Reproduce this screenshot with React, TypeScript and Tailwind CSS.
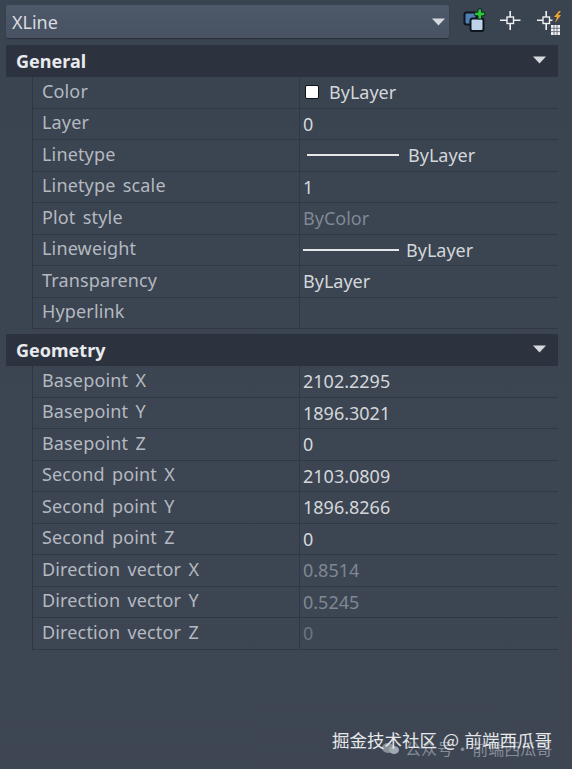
import React from "react";

const font = { fontFamily: '"Noto Sans", "Noto Sans CJK SC", sans-serif' };

type Row = {
  label: string;
  value?: string;
  kind?: "swatch" | "line" | "line2" | "dim" | "dimmer";
};

const general: Row[] = [
  { label: "Color", value: "ByLayer", kind: "swatch" },
  { label: "Layer", value: "0" },
  { label: "Linetype", value: "ByLayer", kind: "line" },
  { label: "Linetype scale", value: "1" },
  { label: "Plot style", value: "ByColor", kind: "dim" },
  { label: "Lineweight", value: "ByLayer", kind: "line2" },
  { label: "Transparency", value: "ByLayer" },
  { label: "Hyperlink" },
];

const geometry: Row[] = [
  { label: "Basepoint X", value: "2102.2295" },
  { label: "Basepoint Y", value: "1896.3021" },
  { label: "Basepoint Z", value: "0" },
  { label: "Second point X", value: "2103.0809" },
  { label: "Second point Y", value: "1896.8266" },
  { label: "Second point Z", value: "0" },
  { label: "Direction vector X", value: "0.8514", kind: "dim" },
  { label: "Direction vector Y", value: "0.5245", kind: "dim" },
  { label: "Direction vector Z", value: "0", kind: "dimmer" },
];

function Caret({ className }: { className: string }) {
  return (
    <svg width="13" height="8" viewBox="0 0 13 8" className={className}>
      <path d="M0 0.5h13L6.5 7.5z" fill="#d5dae0" />
    </svg>
  );
}

function Value({ row }: { row: Row }) {
  if (row.kind === "swatch") {
    return (
      <div className="flex items-center pl-[5px]">
        <span className="w-[14px] h-[14px] bg-white border border-[#11151b] rounded-[2px] mr-[10px]" />
        <span className="text-[#d4d7da]">{row.value}</span>
      </div>
    );
  }
  if (row.kind === "line" || row.kind === "line2") {
    return (
      <div className={row.kind === "line" ? "flex items-center pl-[7px]" : "flex items-center pl-[3px]"}>
        <span className={row.kind === "line" ? "h-[2px] w-[92px] bg-[#e4e6e8] mr-[9px]" : "h-[2px] w-[96px] bg-[#e4e6e8] mr-[7px]"} />
        <span className="text-[#d4d7da]">{row.value}</span>
      </div>
    );
  }
  const tone =
    row.kind === "dim" ? "text-[#7f8894]" : row.kind === "dimmer" ? "text-[#6b7482]" : "text-[#d4d7da]";
  return <div className={`pl-[3px] ${tone}`}>{row.value}</div>;
}

function Section({ title, rows }: { title: string; rows: Row[] }) {
  return (
    <section>
      <div className="h-[32px] flex items-center justify-between pl-[10px] pr-[12px] bg-[#2c323e]">
        <span className="text-[18px] font-bold text-[#e8eaed]">{title}</span>
        <Caret className="mb-[3px]" />
      </div>
      <div className="ml-[26px] border-l border-[#2f3643]">
        {rows.map((row) => (
          <div key={row.label} className="h-[31.5px] grid grid-cols-[266px_1fr] border-b border-[#313845] items-stretch">
            <div className="pl-[9px] flex items-center text-[#b4b9c0] pb-[3px] tracking-[0.15px] [word-spacing:2.5px]">{row.label}</div>
            <div className="border-l border-[#313845] flex flex-col justify-center">
              <Value row={row} />
            </div>
          </div>
        ))}
      </div>
    </section>
  );
}

export default function App() {
  return (
    <div
      className="relative w-[572px] h-[769px] overflow-hidden bg-gradient-to-b from-[#3a4350] to-[#3e4654] text-[18px] leading-[24px] pt-[5px] pl-[6px]"
      style={font}
    >
      {/* Toolbar */}
      <div className="flex items-center h-[33px]">
        <div className="w-[443px] shrink-0 h-[33px] flex items-center justify-between pl-[6px] pr-[4px] rounded-[2px] bg-gradient-to-b from-[#4d5868] to-[#485262] shadow-[0_1px_1px_#2b313b]">
          <span className="text-[#d9dce0]">XLine</span>
          <Caret className="mt-[1px]" />
        </div>
        <svg width="114" height="33" viewBox="0 0 114 33" className="ml-[9px] shrink-0">
          <rect x="6.5" y="7.5" width="12" height="12" rx="2" fill="#4f7fb5" stroke="#10151c" strokeWidth="2" />
          <rect x="12.5" y="13.5" width="13" height="12.5" rx="2" fill="#bcd3ea" stroke="#10151c" strokeWidth="2" />
          <path d="M20 4h3.5v3.2h3.2v3.5h-3.2V14H20v-3.3h-3.3V7.2H20z" fill="#29c93a" stroke="#10151c" strokeWidth="0.8" />
          <rect x="49" y="12" width="6.5" height="6.5" fill="none" stroke="#eef0f2" strokeWidth="1.4" />
          <path d="M52.2 6v6M52.2 18.5V25M42 15.2h7M55.5 15.2h7" stroke="#eef0f2" strokeWidth="1.6" />
          <rect x="85" y="12" width="6.5" height="6.5" fill="none" stroke="#eef0f2" strokeWidth="1.4" />
          <path d="M88.2 6v6M88.2 18.5V25M79 15.2h6M91.5 15.2h3" stroke="#eef0f2" strokeWidth="1.6" />
          <path d="M101 6l-5 6h3l-2 6 6-8h-3l3-4z" fill="#f0a52c" />
          <rect x="93" y="20" width="9" height="10" fill="#eef0f2" />
          <path d="M93 23.3h9M93 26.6h9M96 20v10M99 20v10" stroke="#59616d" strokeWidth="0.8" />
        </svg>
      </div>

      <div className="mt-[7px] w-[552px]">
        <Section title="General" rows={general} />
        <div className="h-[5px]" />
        <Section title="Geometry" rows={geometry} />
      </div>

      {/* Watermark */}
      <svg width="17" height="11" viewBox="0 0 17 11" className="absolute left-[382px] top-[743px]">
        <ellipse cx="6" cy="5" rx="6" ry="5" fill="#8a919b" />
        <ellipse cx="12" cy="7" rx="5" ry="4" fill="#a2a8b0" />
      </svg>
      <div className="absolute left-[405px] top-[736px] text-[16px] leading-[24px] text-[#858c97] whitespace-nowrap [word-spacing:-2px]" style={{ fontFamily: '"Noto Sans CJK SC", sans-serif' }}>
        公众号 · 前端西瓜哥
      </div>
      <div className="absolute left-[332px] top-[728px] text-[17.5px] leading-[24px] text-[#e6e8ea] whitespace-nowrap [word-spacing:1.5px]" style={{ fontFamily: '"Noto Sans CJK SC", sans-serif' }}>
        掘金技术社区 @ 前端西瓜哥
      </div>
    </div>
  );
}
